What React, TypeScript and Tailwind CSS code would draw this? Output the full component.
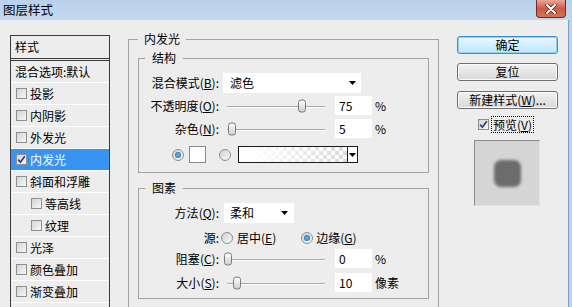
import React from "react";

function Mn({ text, k }: { text: string; k?: string }) {
  return (
    <>
      {text}
      {k && (
        <>
          (<span className="underline underline-offset-[1px]">{k}</span>)
        </>
      )}
    </>
  );
}

function Check({ checked }: { checked?: boolean }) {
  return (
    <span className="flex h-[11px] w-[11px] shrink-0 items-center justify-center border border-[#8e8f8f] bg-linear-to-br from-[#d4d4d4] to-[#f7f7f7]">
      {checked && (
        <svg width="9" height="9" viewBox="0 0 9 9">
          <path d="M1.2 4.6 L3.4 7.2 L7.8 1.2" stroke="#263f8c" strokeWidth="1.7" fill="none" />
        </svg>
      )}
    </span>
  );
}

function Radio({ on }: { on?: boolean }) {
  return (
    <span className="flex h-[12px] w-[12px] shrink-0 items-center justify-center rounded-full border border-[#8e8f8f] bg-linear-to-br from-[#d0d0d0] to-[#fafafa]">
      {on && <span className="h-[6px] w-[6px] rounded-full bg-radial from-[#6ec0f0] to-[#0d5e9c]" />}
    </span>
  );
}

function Arrow() {
  return (
    <svg width="7" height="4" viewBox="0 0 7 4">
      <path d="M0 0 H7 L3.5 4 Z" fill="#000" />
    </svg>
  );
}

function Slider({ pos }: { pos: string }) {
  return (
    <div className="relative ml-[4px] h-full w-[106px]">
      <div className="absolute left-[4px] right-[4px] top-1/2 h-[2px] border-t border-b border-t-[#a9a9a9] border-b-white" />
      <div
        className={`absolute top-1/2 h-[13px] w-[8px] -translate-y-1/2 rounded-[3px] border border-[#7a7a7a] bg-linear-to-b from-white to-[#cfcfcf] ${pos}`}
      />
    </div>
  );
}

function Field({ v }: { v: string }) {
  return (
    <div className="ml-[6px] flex h-full w-[37px] items-center bg-white pl-[4px]">{v}</div>
  );
}

function Btn({ children, main }: { children: React.ReactNode; main?: boolean }) {
  return (
    <div
      className={`flex h-[18px] w-[101px] items-center justify-center rounded-[3px] border bg-linear-to-b ${
        main
          ? "border-[#3c8fd0] from-[#eaf6fd] to-[#bee6fd] shadow-[inset_0_0_0_1px_#8ed0f4]"
          : "border-[#707070] from-[#f2f2f2] to-[#d8d8d8] shadow-[inset_0_0_0_1px_#fbfbfb]"
      }`}
    >
      {children}
    </div>
  );
}

const items: { t: string; on?: boolean; sub?: boolean }[] = [
  { t: "投影" },
  { t: "内阴影" },
  { t: "外发光" },
  { t: "内发光", on: true },
  { t: "斜面和浮雕" },
  { t: "等高线", sub: true },
  { t: "纹理", sub: true },
  { t: "光泽" },
  { t: "颜色叠加" },
  { t: "渐变叠加" },
  { t: "图案叠加" },
  { t: "描边" },
];

export default function App() {
  return (
    <div className="h-[307px] w-[572px] overflow-hidden bg-[#ededed] font-['Noto_Sans_CJK_SC',sans-serif] text-[12px] leading-none text-black">
      {/* title bar */}
      <div className="flex h-[20px] items-start justify-between bg-linear-to-b from-[#bad1eb] to-[#c4d8ef]">
        <span className="pl-[3px] text-[12.5px] leading-[20px]">图层样式</span>
        <div className="mr-[6px] flex h-[18px] w-[30px] items-center justify-center rounded-b-[4px] border border-t-0 border-[#6f2b22] bg-linear-to-b from-[#e8a899] via-[#c85a43] to-[#d5735b]">
          <svg width="12" height="10" viewBox="0 0 12 10">
            <path d="M2 1 L10 9 M10 1 L2 9" stroke="#5a1f18" strokeWidth="3.4" strokeLinecap="round" />
            <path d="M2 1 L10 9 M10 1 L2 9" stroke="#fff" strokeWidth="2" strokeLinecap="round" />
          </svg>
        </div>
      </div>

      {/* body */}
      <div className="flex h-[287px] border-r-[3px] border-[#bcd3ec]">
        <div className="flex flex-1 border-r border-[#7b9dc9]">
          {/* style list */}
          <div className="ml-[10px] mt-[15px] h-[290px] w-[100px] shrink-0 border border-[#3a3a3a]">
            <div className="flex h-[25px] items-center border-b-[3px] border-double border-[#3a3a3a] pl-[4px] pb-[1px]">
              样式
            </div>
            <div className="flex h-[22px] items-center border-b border-white pl-[4px]">混合选项:默认</div>
            {items.map((it) => (
              <div
                key={it.t}
                className={`flex h-[22px] items-center gap-[3px] border-b border-white ${
                  it.sub ? "pl-[20px]" : "pl-[5px]"
                } ${it.on ? "bg-[#3993f3] text-white" : ""}`}
              >
                <Check checked={it.on} />
                <span>{it.t}</span>
              </div>
            ))}
          </div>

          {/* main panel */}
          <fieldset className="ml-[18px] mt-[11px] h-[300px] w-[311px] shrink-0 border border-[#a3a3a3] px-[9px] pt-[3px]">
            <legend className="px-[6px] text-[12px] leading-[16px]">内发光</legend>

            <fieldset className="w-[291px] border border-[#a3a3a3] pl-[6px] pb-[9px]">
              <legend className="px-[7px] leading-[16px]">结构</legend>
              <div className="mt-[7px] flex h-[20px] items-center">
                <span className="w-[74px] shrink-0 text-right">
                  <Mn text="混合模式" k="B" />:
                </span>
                <div className="ml-[4px] flex h-full w-[138px] items-center justify-between bg-white pl-[7px] pr-[5px]">
                  <span>滤色</span>
                  <Arrow />
                </div>
              </div>
              <div className="mt-[3px] flex h-[19px] items-center">
                <span className="w-[74px] shrink-0 text-right">
                  <Mn text="不透明度" k="O" />:
                </span>
                <Slider pos="left-[75px]" />
                <Field v="75" />
                <span className="ml-[3px]">%</span>
              </div>
              <div className="mt-[4px] flex h-[19px] items-center">
                <span className="w-[74px] shrink-0 text-right">
                  <Mn text="杂色" k="N" />:
                </span>
                <Slider pos="left-[5px]" />
                <Field v="5" />
                <span className="ml-[3px]">%</span>
              </div>
              <div className="mt-[8px] flex h-[17px] items-center">
                <span className="ml-[27px]">
                  <Radio on />
                </span>
                <div className="ml-[5px] h-[17px] w-[17px] border border-[#8a8a8a] bg-white" />
                <span className="ml-[13px]">
                  <Radio />
                </span>
                <div className="ml-[7px] flex h-full w-[120px] border border-[#1a1a1a]">
                  <div className="h-full flex-1 bg-[image:repeating-conic-gradient(#d8d8d8_0%_25%,#ffffff_0%_50%)] bg-[length:8px_8px]">
                    <div className="h-full w-full bg-linear-to-r from-white from-10% to-transparent" />
                  </div>
                  <div className="flex w-[10px] items-center justify-center border-l border-[#1a1a1a] bg-white">
                    <Arrow />
                  </div>
                </div>
              </div>
            </fieldset>

            <fieldset className="mt-[7px] w-[291px] border border-[#a3a3a3] pl-[6px] pb-[6px]">
              <legend className="px-[7px] leading-[16px]">图素</legend>
              <div className="mt-[7px] flex h-[20px] items-center">
                <span className="w-[74px] shrink-0 text-right">
                  <Mn text="方法" k="Q" />:
                </span>
                <div className="ml-[5px] flex h-full w-[70px] items-center justify-between bg-white pl-[6px] pr-[6px]">
                  <span>柔和</span>
                  <Arrow />
                </div>
              </div>
              <div className="mt-[6px] flex h-[18px] items-center">
                <span className="w-[74px] shrink-0 text-right">源:</span>
                <span className="ml-[2px]">
                  <Radio />
                </span>
                <span className="ml-[4px]">
                  <Mn text="居中" k="E" />
                </span>
                <span className="ml-[25px]">
                  <Radio on />
                </span>
                <span className="ml-[3px]">
                  <Mn text="边缘" k="G" />
                </span>
              </div>
              <div className="mt-[2px] flex h-[19px] items-center">
                <span className="w-[74px] shrink-0 text-right">
                  <Mn text="阻塞" k="C" />:
                </span>
                <Slider pos="left-[1px]" />
                <Field v="0" />
                <span className="ml-[3px]">%</span>
              </div>
              <div className="mt-[5px] flex h-[19px] items-center">
                <span className="w-[74px] shrink-0 text-right">
                  <Mn text="大小" k="S" />:
                </span>
                <Slider pos="left-[10px]" />
                <Field v="10" />
                <span className="ml-[3px]">像素</span>
              </div>
            </fieldset>
          </fieldset>

          {/* buttons */}
          <div className="ml-[18px] flex flex-col">
            <div className="mt-[16px]">
              <Btn main>确定</Btn>
            </div>
            <div className="mt-[9px]">
              <Btn>复位</Btn>
            </div>
            <div className="mt-[10px]">
              <Btn>
                新建样式(<span className="underline">W</span>)...
              </Btn>
            </div>
            <div className="ml-[21px] mt-[7px] flex items-center">
              <Check checked />
              <span className="ml-[2px] border border-dotted border-black px-[1px] py-[1px] leading-[13px]">
                预览(<span className="underline">V</span>)
              </span>
            </div>
            <div className="ml-[17px] mt-[7px] flex h-[66px] w-[66px] items-center justify-center border border-t-[#8c8c8c] border-l-[#8c8c8c] border-r-[#e2e2e2] border-b-[#e2e2e2] bg-[#d5d5d5]">
              <div className="h-[27px] w-[27px] rounded-[7px] bg-[#6c6c6c] blur-[1.5px]" />
            </div>
          </div>
        </div>
      </div>
    </div>
  );
}
